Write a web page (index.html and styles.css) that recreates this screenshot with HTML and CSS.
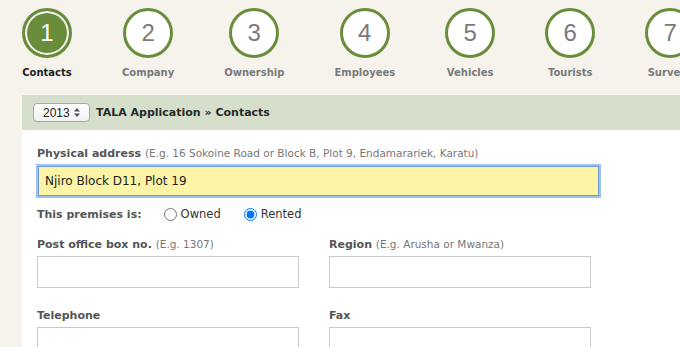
FILE: index.html
```html
<!DOCTYPE html>
<html lang="en">
<head>
    <meta charset="UTF-8">
    <title>TALA Application - Contacts</title>
    <link rel="stylesheet" href="styles.css">
</head>
<body>
    <ul class="steps">
        <li class="step active"><span class="circle">1</span><span class="step-label">Contacts</span></li>
        <li class="step"><span class="circle">2</span><span class="step-label">Company</span></li>
        <li class="step"><span class="circle">3</span><span class="step-label">Ownership</span></li>
        <li class="step"><span class="circle">4</span><span class="step-label">Employees</span></li>
        <li class="step"><span class="circle">5</span><span class="step-label">Vehicles</span></li>
        <li class="step"><span class="circle">6</span><span class="step-label">Tourists</span></li>
        <li class="step"><span class="circle">7</span><span class="step-label">Surveys</span></li>
    </ul>

    <div class="panel">
        <div class="panel-head">
            <span class="year-box">
                <select class="year">
                    <option>2013</option>
                    <option>2012</option>
                </select>
                <svg class="year-arrows" width="6" height="9" viewBox="0 0 6 9">
                    <path d="M3 0 L6 3.5 H0 Z M3 9 L6 5.5 H0 Z" fill="#555"/>
                </svg>
            </span>
            <span class="crumbs">TALA Application &raquo; Contacts</span>
        </div>
        <div class="panel-body">
            <div class="field">
                <label class="field-label">Physical address <span class="hint">(E.g. 16 Sokoine Road or Block B, Plot 9, Endamarariek, Karatu)</span></label>
                <input type="text" class="text wide focused" value="Njiro Block D11, Plot 19">
            </div>
            <div class="premises">
                <span class="field-label">This premises is:</span>
                <label class="choice"><input type="radio" name="premises"> Owned</label>
                <label class="choice"><input type="radio" name="premises" checked> Rented</label>
            </div>
            <div class="cols">
                <div class="field">
                    <label class="field-label">Post office box no. <span class="hint">(E.g. 1307)</span></label>
                    <input type="text" class="text">
                </div>
                <div class="field">
                    <label class="field-label">Region <span class="hint">(E.g. Arusha or Mwanza)</span></label>
                    <input type="text" class="text">
                </div>
                <div class="field">
                    <label class="field-label">Telephone</label>
                    <input type="text" class="text">
                </div>
                <div class="field">
                    <label class="field-label">Fax</label>
                    <input type="text" class="text">
                </div>
            </div>
        </div>
    </div>
</body>
</html>
```

FILE: styles.css
```css
body {
    margin: 0;
    background-color: #f5f3ec;
    font-family: 'DejaVu Sans', sans-serif;
    color: #333;
    overflow: hidden;
}
.steps {
    list-style: none;
    margin: 0;
    padding: 8px 0 0 22px;
    display: flex;
    gap: 50px;
    white-space: nowrap;
}
.step {
    display: flex;
    flex-direction: column;
    align-items: center;
    flex-shrink: 0;
    min-width: 50px;
}
.circle {
    box-sizing: border-box;
    width: 50px;
    height: 50px;
    border: 3px solid #6a8d3c;
    border-radius: 50%;
    background-color: #fff;
    display: flex;
    align-items: center;
    justify-content: center;
    font-family: 'Liberation Sans', sans-serif;
    font-size: 24px;
    color: #7a7a7a;
}
.step.active .circle {
    background-color: #6a8d3c;
    box-shadow: inset 0 0 0 2px #fff;
    color: #fff;
}
.step-label {
    margin-top: 9px;
    font-size: 10px;
    font-weight: bold;
    color: #7a7a7a;
}
.step.active .step-label {
    color: #1e1e1e;
}
.panel {
    margin: 17px 0 0 22px;
}
.panel-head {
    height: 35px;
    background-color: #d6dfcb;
    display: flex;
    align-items: center;
    gap: 6px;
    padding-left: 11px;
}
.year-box {
    position: relative;
    display: flex;
}
.year {
    appearance: none;
    width: 57px;
    height: 19px;
    font-family: 'Liberation Sans', sans-serif;
    font-size: 12px;
    color: #222;
    border: 1px solid #a9a9a9;
    border-radius: 4px;
    background: linear-gradient(#fff, #f1f1f1);
    padding: 0 0 0 9px;
}
.year-arrows {
    position: absolute;
    right: 10px;
    top: 5px;
    pointer-events: none;
}
.crumbs {
    font-size: 11px;
    font-weight: bold;
    color: #2a2a2a;
}
.panel-body {
    background-color: #fff;
    padding: 17px 15px 0 15px;
    height: 230px;
}
.field-label {
    display: block;
    font-size: 11px;
    font-weight: bold;
    color: #555;
    margin-bottom: 5px;
}
.hint {
    font-weight: normal;
    font-size: 10.5px;
    color: #777;
}
.text {
    box-sizing: border-box;
    width: 262px;
    height: 32px;
    border: 1px solid #c8c8c8;
    background-color: #fff;
    padding: 0 6px;
    font-family: 'DejaVu Sans', sans-serif;
    font-size: 12px;
    color: #222;
}
.text.wide {
    width: 561px;
    margin-left: 1px;
    margin-top: 1px;
}
.text.focused {
    height: 30px;
    background-color: #fdf5a5;
    border: 1px solid #6e9ad6;
    box-shadow: 0 0 0 2px #9fc1ec;
    outline: none;
}
.premises {
    display: flex;
    align-items: center;
    margin-top: 10px;
    height: 16px;
}
.premises .field-label {
    margin: 0 22px 0 0;
}
.choice {
    display: flex;
    align-items: center;
    font-size: 11.5px;
    color: #333;
    margin-right: 23px;
}
.choice input {
    margin: 0 4px 0 0;
    width: 13px;
    height: 13px;
}
.cols {
    display: grid;
    grid-template-columns: 262px 262px;
    column-gap: 30px;
    row-gap: 21px;
    margin-top: 16px;
}
```
